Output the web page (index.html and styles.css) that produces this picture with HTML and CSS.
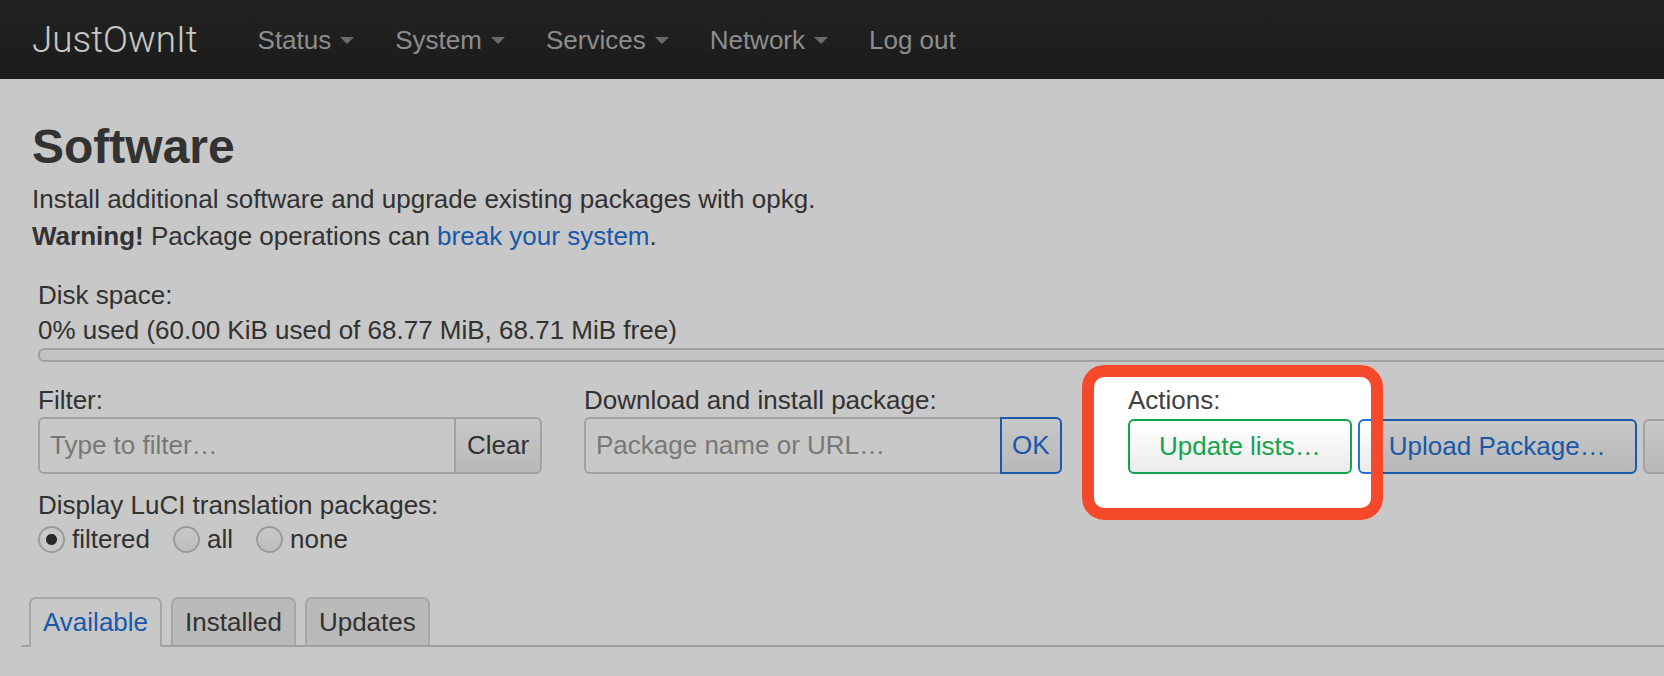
FILE: index.html
```html
<!DOCTYPE html>
<html lang="en">

<head>
    <meta charset="UTF-8">
    <meta name="viewport" content="width=device-width, initial-scale=1.0">
    <title>JustOwnIt - Software - LuCI</title>
    <link rel="stylesheet" href="styles.css">
</head>

<body>

    <header class="navbar">
        <a class="brand" href="#">JustOwnIt</a>
        <ul class="nav">
            <li><a href="#">Status</a><span class="caret"></span></li>
            <li><a href="#">System</a><span class="caret"></span></li>
            <li><a href="#">Services</a><span class="caret"></span></li>
            <li><a href="#">Network</a><span class="caret"></span></li>
            <li><a href="#">Log out</a></li>
        </ul>
    </header>

    <div class="container">
        <h2>Software</h2>
        <p class="desc">
            Install additional software and upgrade existing packages with opkg.<br>
            <strong>Warning!</strong> Package operations can <a href="#">break your system</a>.
        </p>

        <div class="section">
            <div class="label">Disk space:</div>
            <div class="usage">0% used (60.00 KiB used of 68.77 MiB, 68.71 MiB free)</div>
            <div class="progress"><div class="progress-bar" style="width: 0%"></div></div>

            <div class="controls">
                <div class="control">
                    <div class="label">Filter:</div>
                    <div class="input-group">
                        <input type="text" placeholder="Type to filter…">
                        <button class="btn">Clear</button>
                    </div>

                    <div class="label spaced">Display LuCI translation packages:</div>
                    <div class="radios">
                        <label><input type="radio" name="i18n" checked> filtered</label>
                        <label><input type="radio" name="i18n"> all</label>
                        <label><input type="radio" name="i18n"> none</label>
                    </div>
                </div>

                <div class="control">
                    <div class="label">Download and install package:</div>
                    <div class="input-group">
                        <input type="text" placeholder="Package name or URL…">
                        <button class="btn btn-action">OK</button>
                    </div>
                </div>

                <div class="control">
                    <div class="label">Actions:</div>
                    <div class="actions">
                        <button class="btn btn-big btn-positive">Update lists…</button>
                        <button class="btn btn-big btn-action">Upload Package…</button>
                        <button class="btn btn-big">Configure opkg…</button>
                    </div>
                </div>
            </div>
        </div>

        <ul class="tabs">
            <li class="active"><a href="#">Available</a></li>
            <li><a href="#">Installed</a></li>
            <li><a href="#">Updates</a></li>
        </ul>
    </div>

    <!-- callout that dims the page around the actions column -->
    <div class="spotlight"></div>

</body>

</html>
```

FILE: styles.css
```css
html,
body {
    overflow: hidden;
}

body {
    margin: 0;
    font-family: "Liberation Sans", Arial, Helvetica, sans-serif;
    font-size: 26px;
    color: #404040;
    background-color: #fff;
}

a {
    color: #2272d8;
    text-decoration: none;
}

/* top bar */

.navbar {
    height: 79px;
    display: flex;
    align-items: center;
    padding-left: 32px;
    background: linear-gradient(#2d2d2d, #232323);
}

.brand {
    font-family: Roboto, "Liberation Sans", sans-serif;
    font-weight: 300;
    font-size: 36.8px;
    line-height: 44px;
    color: #fff;
    margin-right: 60px;
}

.nav {
    display: flex;
    gap: 41px;
    list-style: none;
    margin: 0;
    padding: 0;
    line-height: 36px;
}

.nav li {
    display: flex;
    align-items: center;
}

.nav a {
    color: #b4b4b4;
}

.caret {
    width: 0;
    height: 0;
    margin-left: 9px;
    margin-top: 2px;
    border-left: 7px solid transparent;
    border-right: 7px solid transparent;
    border-top: 7px solid #888;
}

/* page body */

.container {
    padding-left: 32px;
    width: 1800px;
}

h2 {
    margin: 40px 0 0;
    font-size: 48px;
    line-height: 56px;
}

.desc {
    margin: 6px 0 0;
    line-height: 37px;
}

.section {
    margin-top: 22px;
    padding-left: 6px;
}

.label {
    line-height: 34px;
}

.section > .label:first-child {
    line-height: 36px;
}

.label.spaced {
    margin-top: 14px;
}

.usage {
    line-height: 34px;
}

.progress {
    margin-top: 1px;
    height: 14px;
    box-sizing: border-box;
    border: 2px solid #cdcdcd;
    border-radius: 6px;
    background-color: #f9f9f9;
}

.progress-bar {
    height: 100%;
    background-color: #5cb85c;
}

.controls {
    display: grid;
    grid-template-columns: 546px 544px 700px;
    margin-top: 21px;
}

.input-group {
    display: flex;
    height: 57px;
}

.input-group input {
    width: 416px;
    box-sizing: border-box;
    padding: 0 10px;
    border: 2px solid #cfcfcf;
    border-right: none;
    border-radius: 6px 0 0 6px;
    font: inherit;
    color: #404040;
    background-color: #fff;
}

.input-group input::placeholder {
    color: #999;
}

.input-group .btn {
    border-radius: 0 6px 6px 0;
    padding: 0 11px;
}

.input-group .btn-action {
    padding: 0 10px;
}

.btn {
    font: inherit;
    color: #404040;
    border: 2px solid #cfcfcf;
    border-radius: 6px;
    background: linear-gradient(#fff, #ebebeb);
    cursor: pointer;
    white-space: nowrap;
}

.btn-action {
    color: #2272d8;
    border-color: #2272d8;
}

.btn-positive {
    color: #12a54c;
    border-color: #12a54c;
}

.actions {
    display: flex;
    gap: 6px;
    margin-top: 2px;
}

.btn-big {
    height: 55px;
    padding: 0 29px;
}

.radios {
    display: flex;
    gap: 23px;
    line-height: 34px;
}

.radios label {
    display: flex;
    align-items: center;
}

.radios input {
    appearance: none;
    width: 27px;
    height: 27px;
    margin: 0 7px 0 0;
    border: 2px solid #c6c6c6;
    border-radius: 50%;
    background: linear-gradient(#fff, #f1f1f1);
}

.radios input:checked {
    background: radial-gradient(circle, #333 0 5px, #fff 6px);
}

/* tab strip */

.tabs {
    display: flex;
    gap: 9px;
    list-style: none;
    margin: 41px 0 0 -11px;
    padding: 0 0 0 8px;
    height: 48px;
    border-bottom: 2px solid #cccccc;
}

.tabs li {
    box-sizing: border-box;
    height: 48px;
    padding: 5px 12px 5px;
    line-height: 36px;
    border: 2px solid #d4d4d4;
    border-bottom: none;
    border-radius: 7px 7px 0 0;
    background-color: #eee;
}

.tabs li a {
    color: #404040;
}

.tabs li.active {
    height: 50px;
    background-color: #fff;
}

.tabs li.active a {
    color: #2272d8;
}

/* callout */

.spotlight {
    position: absolute;
    left: 1082px;
    top: 365px;
    width: 301px;
    height: 155px;
    box-sizing: border-box;
    border: 12px solid #f4492a;
    border-radius: 22px;
    box-shadow: 0 0 0 4000px rgba(0, 0, 0, 0.216);
    z-index: 10;
}
```
